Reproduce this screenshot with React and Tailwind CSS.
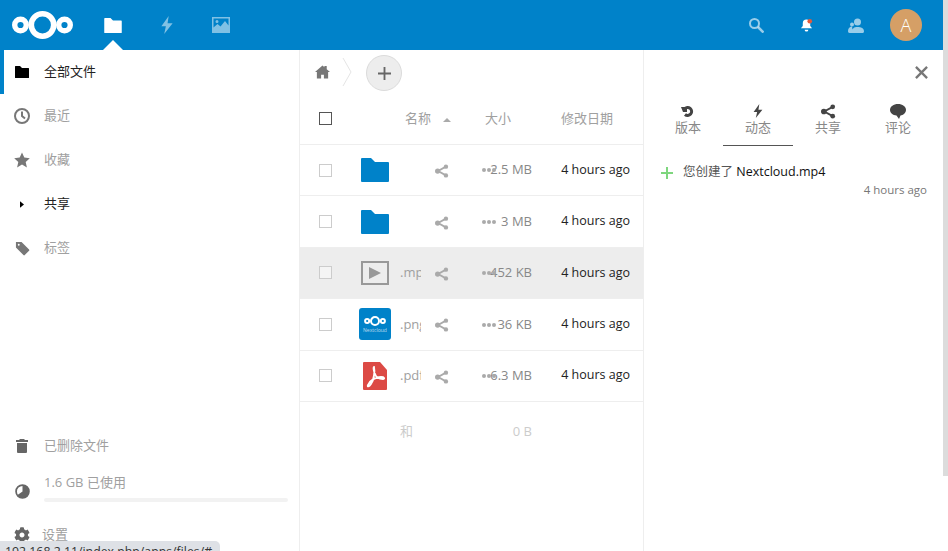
import { FaCog } from 'react-icons/fa';

const font = { fontFamily: '"Open Sans", "Noto Sans CJK SC", sans-serif' };

function Logo({ className }) {
  return (
    <svg viewBox="0 0 61 28" className={className} fill="none" stroke="currentColor">
      <circle cx="8.5" cy="14" r="5.8" strokeWidth="5.4" />
      <circle cx="30.5" cy="14" r="11.2" strokeWidth="5.6" />
      <circle cx="52.5" cy="14" r="5.8" strokeWidth="5.4" />
    </svg>
  );
}

function FolderIcon({ className }) {
  return (
    <svg viewBox="0 0 28 24" className={className} fill="currentColor">
      <path d="M0 1a1 1 0 011-1h9l4 4h13a1 1 0 011 1v18a1 1 0 01-1 1H1a1 1 0 01-1-1z" />
    </svg>
  );
}

function BoltIcon({ className }) {
  return (
    <svg viewBox="0 0 16 16" className={className} fill="currentColor">
      <path d="M9.5 0L3 9h4l-1.5 7L13 6.5H8.5z" />
    </svg>
  );
}

function ShareIcon({ className }) {
  return (
    <svg viewBox="0 0 16 16" className={className} fill="currentColor" stroke="currentColor">
      <path d="M12.5 3L3.5 8l9 5" fill="none" strokeWidth="2" />
      <circle cx="12.5" cy="3" r="2.5" stroke="none" />
      <circle cx="3" cy="8" r="3" stroke="none" />
      <circle cx="12.5" cy="13" r="2.5" stroke="none" />
    </svg>
  );
}

function NavItem({ icon, label, active, current }) {
  return (
    <div className={`flex items-center h-[44px] pr-3 border-l-4 ${current ? 'border-[#0082c9]' : 'border-transparent'}`}>
      <span className="w-[36px] flex items-center justify-center shrink-0">{icon}</span>
      <span className={`ml-[4px] text-[13px] ${active ? 'text-[#222]' : 'text-[#a0a0a0]'}`}>{label}</span>
    </div>
  );
}

function Sidebar() {
  return (
    <aside className="w-[300px] shrink-0 border-r border-[#eee] overflow-hidden">
      <NavItem
        current
        active
        label="全部文件"
        icon={<FolderIcon className="w-[14px] h-[12px] text-black" />}
      />
      <NavItem
        label="最近"
        icon={
          <svg viewBox="0 0 16 16" className="w-[16px] h-[16px] text-[#777]" fill="none" stroke="currentColor" strokeWidth="2">
            <circle cx="8" cy="8" r="7" />
            <path d="M8 3.5V8l3 2.5" />
          </svg>
        }
      />
      <NavItem
        label="收藏"
        icon={
          <svg viewBox="0 0 16 16" className="w-[16px] h-[16px] text-[#777]" fill="currentColor">
            <path d="M8 .5l2.3 5.1 5.5.6-4.1 3.7 1.2 5.5L8 12.6l-4.9 2.8 1.2-5.5L.2 6.2l5.5-.6z" />
          </svg>
        }
      />
      <NavItem
        active
        label="共享"
        icon={
          <svg viewBox="0 0 5 8" className="w-[4px] h-[7px] text-black" fill="currentColor">
            <path d="M0 0l5 4-5 4z" />
          </svg>
        }
      />
      <NavItem
        label="标签"
        icon={
          <svg viewBox="0 0 16 16" className="w-[15px] h-[15px] text-[#777]" fill="currentColor">
            <path d="M1 1h6l8 8a1 1 0 010 1.4l-4.6 4.6a1 1 0 01-1.4 0L1 7zM4 3a1 1 0 100 2 1 1 0 000-2z" fillRule="evenodd" />
          </svg>
        }
      />

      <div className="mt-[154px]">
        <NavItem
          label="已删除文件"
          icon={
            <svg viewBox="0 0 12 14" className="w-[12px] h-[14px] text-[#666]" fill="currentColor">
              <path d="M4 0h4l1 1h3v2H0V1h3zM1 4h10v9a1 1 0 01-1 1H2a1 1 0 01-1-1z" />
            </svg>
          }
        />
        <div className="flex items-center h-[45px] border-l-4 border-transparent">
          <span className="w-[36px] flex justify-center shrink-0">
            <svg viewBox="0 0 14 14" className="w-[15px] h-[15px] mt-[1px] text-[#666]" fill="none" stroke="currentColor">
              <circle cx="7" cy="7" r="6" strokeWidth="1.6" />
              <path d="M7 1a6 6 0 11-5 9.4L7 7z" fill="currentColor" stroke="none" />
            </svg>
          </span>
          <div className="ml-[4px] w-[244px] -mt-[6px]">
            <div className="text-[13px] text-[#a0a0a0] leading-[18px]">1.6 GB 已使用</div>
            <div className="h-[4px] mt-[7px] rounded-full bg-[#f2f2f2]" />
          </div>
        </div>
        <div className="flex items-center h-[44px] border-l-4 border-transparent">
          <span className="w-[36px] flex justify-center shrink-0">
            <FaCog className="w-[16px] h-[16px] text-[#666]" />
          </span>
          <span className="ml-[2px] text-[13px] text-[#a0a0a0]">设置</span>
        </div>
      </div>
    </aside>
  );
}

function FileIcon({ type }) {
  if (type === 'folder') {
    return <FolderIcon className="w-[28px] h-[24px] ml-[2px] text-[#0082c9]" />;
  }
  if (type === 'video') {
    return (
      <div className="w-[28px] h-[24px] ml-[2px] border-2 border-[#999] flex items-center justify-center">
        <svg viewBox="0 0 12 12" className="w-[12px] h-[12px] text-[#999]" fill="currentColor">
          <path d="M0 0l12 6-12 6z" />
        </svg>
      </div>
    );
  }
  if (type === 'png') {
    return (
      <div className="w-[32px] h-[32px] rounded-[3px] bg-[#0082c9] flex flex-col items-center justify-center text-white">
        <Logo className="w-[24px] h-[10px] mt-[2px]" />
        <span className="text-[5px] leading-[8px] opacity-70">Nextcloud</span>
      </div>
    );
  }
  return (
    <svg viewBox="0 0 24 28" className="w-[24px] h-[28px] ml-[4px]">
      <path d="M0 1a1 1 0 011-1h16l7 8v19a1 1 0 01-1 1H1a1 1 0 01-1-1z" fill="#dc4a45" />
      <path
        d="M11 5c-1 0 0 5 1 7 1 3 4 5 8 5 2 0 1.500-2-2-2-5 0-11 3-13 8-1 2 1 2 3-1 3-4 4-13 3-17z"
        fill="none"
        stroke="#fff"
        strokeWidth="1.800"
      />
    </svg>
  );
}

const files = [
  { type: 'folder', ext: '', size: '2.5 MB' },
  { type: 'folder', ext: '', size: '3 MB' },
  { type: 'video', ext: '.mp4', size: '452 KB', hover: true },
  { type: 'png', ext: '.png', size: '36 KB' },
  { type: 'pdf', ext: '.pdf', size: '6.3 MB' },
];

function FileRow({ file }) {
  return (
    <div className={`flex items-center h-[51.400px] border-b border-[#eee] ${file.hover ? 'bg-[#ededed] border-[#ededed]' : ''}`}>
      <div className="w-[59px] pl-[19px] shrink-0">
        <div className="w-[13px] h-[13px] border border-[#ccc] bg-white/40" />
      </div>
      <div className="w-[41px] shrink-0">
        <FileIcon type={file.type} />
      </div>
      <div className="w-[21px] shrink-0 overflow-hidden text-[13px] text-[#a0a0a0] whitespace-nowrap">{file.ext}</div>
      <div className="w-[42px] shrink-0 flex justify-center">
        <ShareIcon className="w-[14px] h-[14px] mt-[2px] text-[#aaa]" />
      </div>
      <div className="w-[69px] shrink-0 relative text-right text-[13px] text-[#888]">
        {file.size}
        <span className="absolute left-[19px] top-[8px] flex gap-[1px]">
          <span className="w-[4px] h-[4px] rounded-full bg-[#aaa]" />
          <span className="w-[4px] h-[4px] rounded-full bg-[#aaa]" />
          <span className="w-[4px] h-[4px] rounded-full bg-[#aaa]" />
        </span>
      </div>
      <div className="w-[98px] shrink-0 text-right text-[12.500px] text-[#222]">4 hours ago</div>
    </div>
  );
}

function FileList() {
  return (
    <main className="w-[344px] shrink-0 border-r border-[#eee]">
      <div className="flex items-center h-[44px] pl-[15px]">
        <svg viewBox="0 0 16 14" className="w-[15px] h-[14px] text-[#777]" fill="currentColor">
          <path d="M8 0l2 1.800V.500h2.500V4L16 7h-2v7H9.500V10h-3v4H2V7H0z" />
        </svg>
        <svg viewBox="0 0 10 30" className="w-[10px] h-[30px] ml-[12px] text-[#e5e5e5]" fill="none" stroke="currentColor">
          <path d="M1 1l8 14-8 14" />
        </svg>
        <div className="w-[36px] h-[36px] ml-[14px] mt-[2px] rounded-full bg-[#ededed] border border-[#dbdbdb] flex items-center justify-center">
          <svg viewBox="0 0 14 14" className="w-[13px] h-[13px] text-[#666]" fill="none" stroke="currentColor" strokeWidth="2">
            <path d="M7 0v14M0 7h14" />
          </svg>
        </div>
      </div>

      <div className="flex items-center h-[51px] border-b border-[#eee] text-[13px] text-[#a0a0a0]">
        <div className="w-[59px] pl-[19px] -mt-[1px] shrink-0">
          <div className="w-[13px] h-[13px] border border-[#555]" />
        </div>
        <div className="w-[46px] shrink-0" />
        <div className="w-[80px] shrink-0 flex items-center">
          名称
          <svg viewBox="0 0 8 4" className="w-[8px] h-[4px] ml-[12px] mt-[2px] text-[#aaa]" fill="currentColor">
            <path d="M4 0l4 4H0z" />
          </svg>
        </div>
        <div className="w-[76px] shrink-0">大小</div>
        <div className="shrink-0">修改日期</div>
      </div>

      {files.map((file, i) => (
        <FileRow key={i} file={file} />
      ))}

      <div className="flex items-center h-[59px] text-[13px] text-[#ccc]">
        <div className="w-[100px] shrink-0" />
        <div className="w-[63px] shrink-0">和</div>
        <div className="w-[69px] shrink-0 text-right">0 B</div>
      </div>
    </main>
  );
}

const tabs = [
  {
    label: '版本',
    icon: (
      <svg viewBox="0 0 14 14" className="w-[14px] h-[14px]" fill="none" stroke="currentColor" strokeWidth="3">
        <path d="M3.500 5a4 4 0 11.500 5.500" />
        <path d="M0 3h6v5H2z" fill="currentColor" stroke="none" />
      </svg>
    ),
  },
  { label: '动态', active: true, icon: <BoltIcon className="w-[14px] h-[14px]" /> },
  { label: '共享', icon: <ShareIcon className="w-[15px] h-[15px]" /> },
  {
    label: '评论',
    icon: (
      <svg viewBox="0 0 16 15" className="w-[16px] h-[15px]" fill="currentColor">
        <path d="M8 0c4.400 0 8 2.500 8 5.800s-3 5.500-5.500 5.700L9 15 6.500 11.500C3 11.300 0 9 0 5.800S3.600 0 8 0z" />
      </svg>
    ),
  },
];

function DetailPanel() {
  return (
    <section className="flex-1 min-w-0">
      <div className="flex items-center justify-end h-[44px] pr-[15px]">
        <svg viewBox="0 0 14 14" className="w-[13px] h-[13px] text-[#777]" fill="none" stroke="currentColor" strokeWidth="2.500">
          <path d="M1 1l12 12M13 1L1 13" />
        </svg>
      </div>

      <div className="flex ml-[9px] mt-[8px]">
        {tabs.map((tab) => (
          <div
            key={tab.label}
            className={`w-[70px] h-[44px] flex flex-col items-center border-b ${tab.active ? 'border-[#555]' : 'border-transparent'}`}
          >
            <span className="h-[16px] mt-[1px] flex items-center text-[#444]">{tab.icon}</span>
            <span className="-mt-[1px] text-[13px] leading-[18px] text-[#888]">{tab.label}</span>
          </div>
        ))}
      </div>

      <div className="flex items-center mt-[17px] ml-[17px]">
        <svg viewBox="0 0 12 12" className="w-[12px] h-[12px] mt-[1px] text-[#7ed67e]" fill="none" stroke="currentColor" strokeWidth="2">
          <path d="M6 0v12M0 6h12" />
        </svg>
        <span className="ml-[10px] text-[12.500px] leading-[18px] text-[#555]">
          您创建了 <span className="font-medium text-[#111]">Nextcloud.mp4</span>
        </span>
      </div>
      <div className="text-right pr-[16px] text-[11.500px] leading-[18px] text-[#777]">4 hours ago</div>
    </section>
  );
}

function Header() {
  return (
    <header className="h-[50px] bg-[#0082c9] flex items-center shrink-0">
      <Logo className="w-[61px] h-[28px] ml-[12px] text-white" />
      <nav className="flex items-center ml-[13px]">
        <div className="w-[54px] h-[50px] relative flex items-center justify-center">
          <FolderIcon className="w-[18px] h-[15px] text-white" />
          <span className="absolute bottom-0 left-[17px] w-0 h-0 border-x-[10px] border-x-transparent border-b-[10px] border-b-white" />
        </div>
        <div className="w-[54px] flex justify-center">
          <BoltIcon className="w-[18px] h-[18px] text-white/50" />
        </div>
        <div className="w-[54px] flex justify-center">
          <svg viewBox="0 0 18 16" className="w-[18px] h-[16px] text-white/50" fill="currentColor">
            <path
              d="M0 0h18v16H0zM1.500 1.500v9l4-3.500 3 2.500L13 4l3.500 4.500v-7zM5 3a1.500 1.500 0 100 3 1.500 1.500 0 000-3z"
              fillRule="evenodd"
            />
          </svg>
        </div>
      </nav>
      <div className="ml-auto flex items-center">
        <div className="w-[50px] flex justify-center">
          <svg viewBox="0 0 15 15" className="w-[15px] h-[15px] text-white/60" fill="none" stroke="currentColor" strokeWidth="2">
            <circle cx="5.500" cy="5.500" r="4.500" />
            <path d="M9 9l5.500 5.500" strokeWidth="2.500" />
          </svg>
        </div>
        <div className="w-[50px] flex justify-center">
          <svg viewBox="0 0 14 14" className="w-[13px] h-[14px]">
            <path d="M7 1a4 4 0 014 4v3l2 2.500H1L3 8V5a4 4 0 014-4zM5 12h4a2 2 0 01-4 0z" fill="#fff" />
            <circle cx="10.500" cy="3" r="2.500" fill="#e5593a" />
          </svg>
        </div>
        <div className="w-[50px] flex justify-center">
          <svg viewBox="0 0 16 15" className="w-[16px] h-[15px] text-white/60" fill="currentColor">
            <circle cx="9.500" cy="4" r="3.500" />
            <circle cx="4" cy="6.500" r="2" />
            <path d="M0 13c0-3 2-4.500 4-4.500L5 15H1.500C.500 15 0 14 0 13zM4 15c0-5 2-6 5.500-6s6.500 1 6.500 4.500c0 1-1 1.500-2 1.500z" />
          </svg>
        </div>
        <div className="w-[32px] h-[32px] ml-[9px] mr-[21px] rounded-full bg-[#d59f66] flex items-center justify-center text-white text-[18px] font-light">
          A
        </div>
      </div>
    </header>
  );
}

export default function App() {
  return (
    <div className="w-[948px] h-[551px] overflow-hidden relative flex bg-white" style={font}>
      <div className="w-[943px] shrink-0 flex flex-col">
        <Header />
        <div className="flex flex-1 min-h-0">
          <Sidebar />
          <FileList />
          <DetailPanel />
        </div>
      </div>
      <div className="w-[5px] h-[476px] bg-[#dcdcdc]" />

      <div className="absolute left-0 bottom-0 w-[220px] h-[10px] overflow-hidden rounded-tr-[5px] bg-[#dee1e6] pl-[5px] pt-[3px] text-[12.300px] leading-[16px] text-[#333] whitespace-nowrap">
        192.168.2.11/index.php/apps/files/#
      </div>
    </div>
  );
}
